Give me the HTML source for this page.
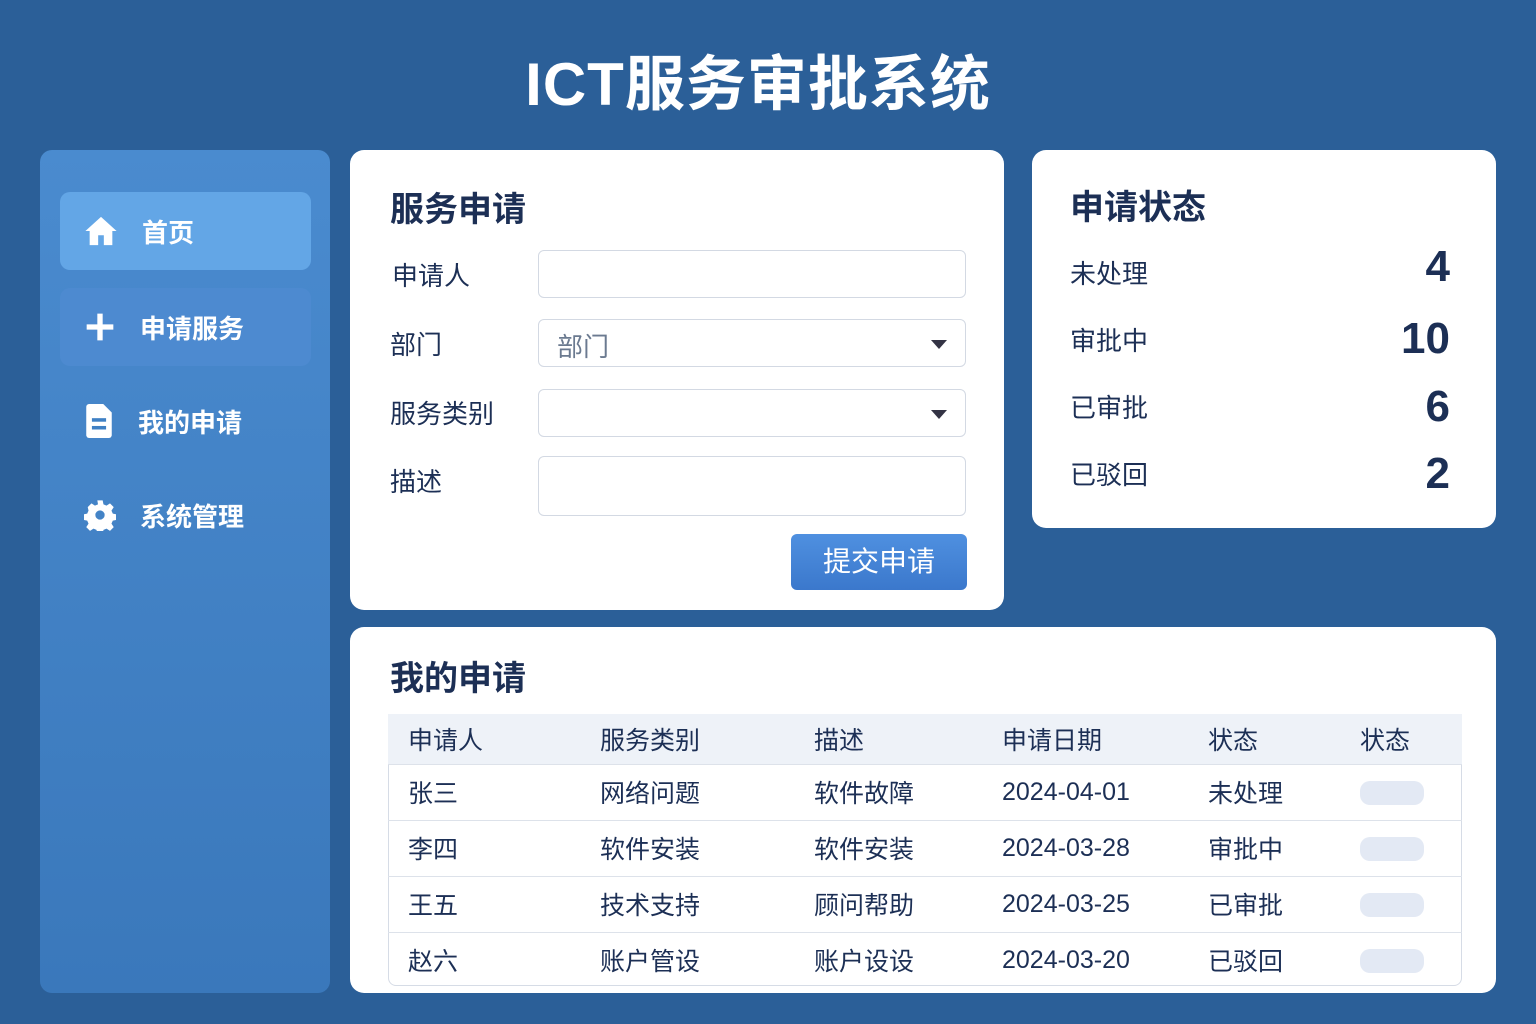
<!DOCTYPE html>
<html><head><meta charset="utf-8"><style>
*{margin:0;padding:0;box-sizing:border-box}
body{width:1536px;height:1024px;overflow:hidden;background:#2b5f98;font-family:"Liberation Sans","Noto Sans CJK SC",sans-serif;position:relative}
.abs{position:absolute}
h1{position:absolute;left:0;width:1516px;top:36px;text-align:center;color:#fff;font-size:60px;font-weight:bold;letter-spacing:1px}
.side{left:40px;top:150px;width:290px;height:843px;border-radius:12px;background:linear-gradient(180deg,#4a8bcf,#3a78bb)}
.nav{position:absolute;left:20px;width:251px;height:78px;border-radius:10px;color:#fff;font-size:26px;font-weight:bold;display:flex;align-items:center}
.nav svg{margin-left:24px;margin-right:24px}
.card{background:#fff;border-radius:14px;position:absolute}
.card h2{position:absolute;font-size:34px;color:#1c2f55;font-weight:bold}
.lbl{position:absolute;font-size:26px;color:#1c2f55}
.inp{position:absolute;left:188px;width:428px;height:48px;border:1.5px solid #d3d9e3;border-radius:6px;background:#fff}
.tri{position:absolute;right:18px;top:20px;border-left:8px solid transparent;border-right:8px solid transparent;border-top:9px solid #334}
.num{position:absolute;right:46px;font-size:44px;color:#1c2f55;font-weight:bold}
table{position:absolute;left:38px;top:87px;width:1074px;border-collapse:collapse;font-size:25px;color:#1c2f55}
.tw{position:absolute;left:38px;top:87px;width:1074px;height:272px;border:1.5px solid #d6dce6;border-radius:8px}
td,th{text-align:left;font-weight:normal;padding-left:20px;height:56px;border-bottom:1px solid #dde2ea}
th{height:50px;background:#eef2f8}
tr:last-child td{border-bottom:none}
.pill{display:inline-block;width:64px;height:24px;border-radius:10px;background:#e3e9f4;vertical-align:middle}
</style></head><body>
<h1>ICT服务审批系统</h1>
<div class="abs side">
 <div class="nav" style="top:42px;background:#63a6e6">
  <svg width="34" height="34" viewBox="0 0 24 24"><path d="M12 2 1 12h3v10h6v-7h4v7h6V12h3z" fill="#fff"/></svg>首页</div>
 <div class="nav" style="top:138px;background:#4d8ad0">
  <svg width="32" height="32" viewBox="0 0 24 24"><path d="M10 2h4v8h8v4h-8v8h-4v-8H2v-4h8z" fill="#fff"/></svg>申请服务</div>
 <div class="nav" style="top:232px">
  <svg width="30" height="34" viewBox="0 0 20 24"><path d="M3 0h10l6 6v16a2 2 0 0 1-2 2H3a2 2 0 0 1-2-2V2a2 2 0 0 1 2-2z" fill="#fff"/><rect x="5" y="10" width="10" height="2.5" fill="#3f80c4"/><rect x="5" y="15.5" width="10" height="2.5" fill="#3f80c4"/></svg>我的申请</div>
 <div class="nav" style="top:326px">
  <svg width="32" height="32" viewBox="0 0 24 24"><path fill="#fff" d="M10 1h4l.6 3 2.3 1 2.6-1.7 2.8 2.8-1.7 2.6 1 2.3 3 .6v4l-3 .6-1 2.3 1.7 2.6-2.8 2.8-2.6-1.7-2.3 1-.6 3h-4l-.6-3-2.3-1-2.6 1.7-2.8-2.8 1.7-2.6-1-2.3-3-.6v-4l3-.6 1-2.3L2.8 6.1l2.8-2.8 2.6 1.7 2.3-1zM12 8.5a3.5 3.5 0 1 0 0 7 3.5 3.5 0 0 0 0-7z"/></svg>系统管理</div>
</div>

<div class="card" style="left:350px;top:150px;width:654px;height:460px">
 <h2 style="left:40px;top:32px">服务申请</h2>
 <div class="lbl" style="left:42px;top:106px">申请人</div><div class="inp" style="top:100px"></div>
 <div class="lbl" style="left:40px;top:175px">部门</div><div class="inp" style="top:169px"><span style="position:absolute;left:18px;top:7px;font-size:26px;color:#6b7a90">部门</span><div class="tri"></div></div>
 <div class="lbl" style="left:40px;top:244px">服务类别</div><div class="inp" style="top:239px"><div class="tri"></div></div>
 <div class="lbl" style="left:40px;top:312px">描述</div><div class="inp" style="top:306px;height:60px"></div>
 <div style="position:absolute;left:441px;top:384px;width:176px;height:56px;border-radius:6px;background:linear-gradient(#4f90e0,#3b78cc);color:#fff;font-size:28px;text-align:center;line-height:56px">提交申请</div>
</div>

<div class="card" style="left:1032px;top:150px;width:464px;height:378px">
 <h2 style="left:38px;top:30px">申请状态</h2>
 <div class="lbl" style="left:38px;top:104px">未处理</div><div class="num" style="top:92px">4</div>
 <div class="lbl" style="left:38px;top:171px">审批中</div><div class="num" style="top:164px">10</div>
 <div class="lbl" style="left:38px;top:238px">已审批</div><div class="num" style="top:232px">6</div>
 <div class="lbl" style="left:38px;top:305px">已驳回</div><div class="num" style="top:299px">2</div>
</div>

<div class="card" style="left:350px;top:627px;width:1146px;height:366px">
 <h2 style="left:40px;top:24px">我的申请</h2>
 <div class="tw"></div>
 <table>
  <tr><th style="width:192px">申请人</th><th style="width:214px">服务类别</th><th style="width:188px">描述</th><th style="width:206px">申请日期</th><th style="width:152px">状态</th><th>状态</th></tr>
  <tr><td>张三</td><td>网络问题</td><td>软件故障</td><td>2024-04-01</td><td>未处理</td><td><span class="pill"></span></td></tr>
  <tr><td>李四</td><td>软件安装</td><td>软件安装</td><td>2024-03-28</td><td>审批中</td><td><span class="pill"></span></td></tr>
  <tr><td>王五</td><td>技术支持</td><td>顾问帮助</td><td>2024-03-25</td><td>已审批</td><td><span class="pill"></span></td></tr>
  <tr><td>赵六</td><td>账户管设</td><td>账户设设</td><td>2024-03-20</td><td>已驳回</td><td><span class="pill"></span></td></tr>
 </table>
</div>
</body></html>
